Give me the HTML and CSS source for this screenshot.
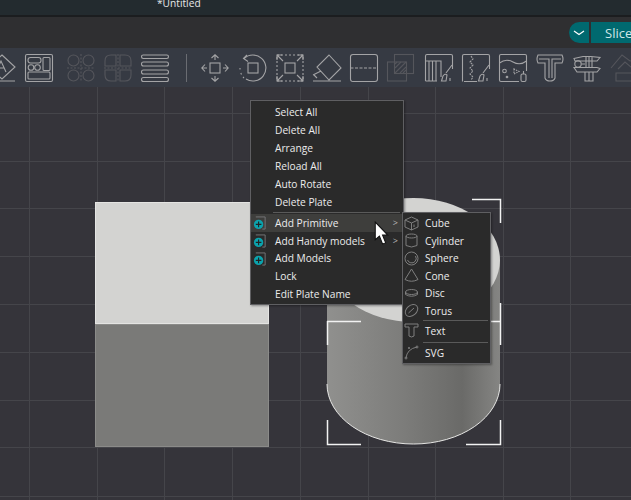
FILE: index.html
```html
<!DOCTYPE html>
<html lang="en">
<head>
<meta charset="utf-8">
<title>Untitled</title>
<link rel="stylesheet" href="styles.css">
</head>
<body>
<div class="app">
  <header class="titlebar"><span class="doc-title">*Untitled</span></header>
  <div class="actionbar">
    <button class="caret-btn" aria-label="More"><svg viewBox="0 0 12 6" width="12" height="6"><path d="M1 1 6 4.500 11 1" fill="none" stroke="#fff" stroke-width="1.200"/></svg></button>
    <button class="slice-btn">Slice</button>
  </div>
  <nav class="toolbar">
    <svg class="tool" viewBox="0 0 28 28"><path d="M14 1 27 13 14 25 1 13ZM0 27H27"/><path d="M8 18 13 7 18 18M10 14H16"/></svg>
    <svg class="tool" viewBox="0 0 28 28"><rect x=".5" y=".5" width="27" height="27" rx="1.500"/><rect x="3" y="3.500" width="13" height="5.500" rx="2.500"/><rect x="18" y="3.500" width="7" height="13" rx="1"/><circle cx="6" cy="13.500" r="2.800"/><circle cx="12.500" cy="13.500" r="2.800"/><rect x="3" y="18" width="22" height="7" rx="1"/></svg>
    <svg class="tool dim group-start" viewBox="0 0 28 28"><circle cx="6.500" cy="6.500" r="5.500"/><circle cx="21.500" cy="6.500" r="5.500"/><circle cx="6.500" cy="21.500" r="5.500"/><circle cx="21.500" cy="21.500" r="5.500"/><path d="M0 14H28M14 0V28" stroke-dasharray="2 1.500"/></svg>
    <svg class="tool dim" viewBox="0 0 28 28"><path d="M12 1H7Q1 1 1 7V12H12ZM16 1H21Q27 1 27 7V12H16ZM12 27H7Q1 27 1 21V16H12ZM16 27H21Q27 27 27 21V16H16Z"/><path d="M14 0V28M0 14H28" stroke-dasharray="2 1.500"/></svg>
    <svg class="tool" viewBox="0 0 28 28"><rect x=".5" y="1" width="27" height="3.500" rx="1.700"/><rect x=".5" y="8" width="27" height="4" rx="2"/><rect x=".5" y="16" width="27" height="4" rx="2"/><rect x=".5" y="23.500" width="27" height="4" rx="2"/></svg>
    <span class="tool-sep"></span>
    <svg class="tool" viewBox="0 0 28 28"><rect x="9" y="9" width="10" height="10"/><path d="M14 1V6M10.500 4 14 .8 17.500 4M14 22V27M10.500 24 14 27.200 17.500 24M1 14H6M4 10.500 .8 14 4 17.500M22 14H27M24 10.500 27.200 14 24 17.500"/></svg>
    <svg class="tool" viewBox="0 0 28 28"><rect x="9" y="9" width="10" height="10"/><path d="M5 4.500A13 13 0 1 1 7 25"/><path d="M8 1 4.500 4.500 9 7.500M1 14V15.500M1.800 19 2.500 20.500M4 23 5 24"/></svg>
    <svg class="tool" viewBox="0 0 28 28"><rect x="9" y="9" width="10" height="10"/><rect x="1" y="1" width="26" height="26" stroke-dasharray="2 2"/><path d="M7 7 1 1M1 6V1H6M21 7 27 1M22 1H27V6M7 21 1 27M1 22V27H6M21 21 27 27M22 27H27V22"/></svg>
    <svg class="tool" viewBox="0 0 28 28"><path d="M16 1 28 14 16 26 4 13ZM0 21 8 17M1 21 4 24M0 27H28"/></svg>
    <svg class="tool" viewBox="0 0 28 28"><rect x=".5" y=".5" width="27" height="27" rx="2.500"/><path d="M.5 14H27.500" stroke-dasharray="3 1.500"/></svg>
    <svg class="tool dim" viewBox="0 0 28 28"><rect x="7.500" y=".5" width="19" height="19"/><rect x=".5" y="8" width="19" height="19"/><path d="M8 19 19 8M8 14 14 8M13 19 19 13M8 10 10 8M16 19 19 16"/></svg>
    <svg class="tool" viewBox="0 0 28 28"><path d="M.5 27V2Q.5 .5 2 .5H26Q27.500 .5 27.500 2V15M.5 7H16V23M.5 27H12M4 7V27M7.500 7V27M11 7V27"/><path d="M27 11 21 19M16.500 27 18 22Q20 19 22 21L21 27ZM25 24V27"/></svg>
    <svg class="tool" viewBox="0 0 28 28"><path d="M.5 27.500V2Q.5 .5 2 .5H26Q27.500 .5 27.500 2V15M15 27.500H2"/><path d="M9 2 11 5 8 8 11 11 8 14 11 17 8 20 11 23 9 26" stroke-dasharray="2 1"/><path d="M27 11 21 19M16.500 27 18 22Q20 19 22 21L21 27ZM25 24V27"/></svg>
    <svg class="tool" viewBox="0 0 28 28"><path d="M20 27.500H2Q.5 27.500 .5 26V2Q.5 .5 2 .5H26Q27.500 .5 27.500 2V17"/><path d="M.5 9Q7 4 14 8T27.500 7"/><circle cx="5.500" cy="17" r="1.800"/><circle cx="8" cy="23" r=".8"/><path d="M15 15V20L20 17.500Z" stroke-dasharray="1.500 1"/><rect x="22" y="20" width="5" height="7.500" rx="1.500"/><path d="M24.500 17V20"/></svg>
    <svg class="tool" viewBox="0 0 28 28"><path d="M2 1H26Q28 5 26 9H19V24Q18 27 14 27 10 27 9 24V9H2Q0 5 2 1Z"/><path d="M3 5H13V24M25 5H16V24"/></svg>
    <svg class="tool" viewBox="0 0 28 28"><path d="M1 4.500 10 2.500H18L27 3.500 24 7H2ZM1 13.500H24L27 14.500 24 18H4ZM13 2.500V13.500M19 2.500V13.500M16 2.500V13.500M12 18V27H20V18M16 18V27M8.500 10H12"/><circle cx="5" cy="10" r="3.200"/></svg>
    <svg class="tool dim" viewBox="0 0 28 28"><path d="M1 14 12 1 20 7 27 5M8 15 15 8 22 14M6 19H28V27H6Z"/></svg>
  </nav>
  <main class="stage">
    <svg class="scene" viewBox="0 87 631 413" aria-hidden="true">
      <defs>
        <linearGradient id="body" x1="0" x2="1" y1="0" y2="0">
          <stop offset="0" stop-color="#90908e"/>
          <stop offset=".45" stop-color="#7c7c7a"/>
          <stop offset=".78" stop-color="#6a6a68"/>
          <stop offset="1" stop-color="#858583"/>
        </linearGradient>
      </defs>
      <g class="grid">
        <path d="M29.500 87V500M97.500 87V500M164.500 87V500M232.500 87V500M300.500 87V500M368.500 87V500M435.500 87V500M503.500 87V500M570.500 87V500"/>
        <path d="M0 113.500H631M0 161.500H631M0 208.500H631M0 256.500H631M0 304.500H631M0 352.500H631M0 400.500H631M0 447.500H631M0 496.500H631"/>
      </g>
      <rect x="95.500" y="202.500" width="173" height="121" fill="#d3d3d1" stroke="#e4e4e2"/>
      <rect x="95.500" y="324.500" width="173" height="122" fill="#7a7a78" stroke="#8b8b89"/>
      <path d="M327 260V384A86.500 60 0 0 0 500 384V260Z" fill="url(#body)"/>
      <path d="M327 384A86.500 60 0 0 0 500 384" fill="none" stroke="#e6e6e4"/>
      <ellipse cx="413.500" cy="260" rx="86.500" ry="62" fill="#d3d3d1"/>
      <path class="frame" d="M472 199.500H500.500V223M327 321.500H361M490 321.500H500.500M500.500 303V345M327.500 321V345M327.500 420V444.500H361M466 444.500H500.500V420"/>
    </svg>

    <div class="menu main-menu">
      <div class="item"><span class="label">Select All</span></div>
      <div class="item"><span class="label">Delete All</span></div>
      <div class="item"><span class="label">Arrange</span></div>
      <div class="item"><span class="label">Reload All</span></div>
      <div class="item"><span class="label">Auto Rotate</span></div>
      <div class="item"><span class="label">Delete Plate</span></div>
      <div class="sep"></div>
      <div class="item active"><svg class="add" viewBox="0 0 15 15"><path class="add-box" d="M3 1H13V14H10"/><circle cx="6" cy="9" r="5" fill="#0ba3ad"/><path d="M6 6V12M3 9H9" stroke="#222" stroke-width="1.200"/></svg><span class="label">Add Primitive</span><span class="arrow">&gt;</span></div>
      <div class="item"><svg class="add" viewBox="0 0 15 15"><path class="add-box" d="M3 1H13V14H10"/><circle cx="6" cy="9" r="5" fill="#0ba3ad"/><path d="M6 6V12M3 9H9" stroke="#222" stroke-width="1.200"/></svg><span class="label">Add Handy models</span><span class="arrow">&gt;</span></div>
      <div class="item"><svg class="add" viewBox="0 0 15 15"><path class="add-box" d="M3 1H13V14H10"/><circle cx="6" cy="9" r="5" fill="#0ba3ad"/><path d="M6 6V12M3 9H9" stroke="#222" stroke-width="1.200"/></svg><span class="label">Add Models</span></div>
      <div class="item"><span class="label">Lock</span></div>
      <div class="item"><span class="label">Edit Plate Name</span></div>
    </div>

    <div class="menu sub-menu">
      <div class="item"><svg class="shape" viewBox="0 0 15 15"><path d="M1 4 7.500 1 14 4V11L7.500 14 1 11ZM1 4 7.500 7 14 4M7.500 7V14"/><path d="M10 8.500V11"/></svg><span class="label">Cube</span></div>
      <div class="item"><svg class="shape" viewBox="0 0 15 15"><ellipse cx="7.500" cy="3" rx="5.500" ry="2"/><path d="M2 3V12.500Q7.500 15.500 13 12.500V3"/></svg><span class="label">Cylinder</span></div>
      <div class="item"><svg class="shape" viewBox="0 0 15 15"><circle cx="7.500" cy="7.500" r="6.500"/><path d="M3.500 9A4.500 4.500 0 0 0 11 10.500 4.500 4.500 0 0 0 11.500 5"/></svg><span class="label">Sphere</span></div>
      <div class="item"><svg class="shape" viewBox="0 0 15 15"><path d="M7.500 1 1 11.500Q7.500 15 14 11.500Z"/></svg><span class="label">Cone</span></div>
      <div class="item"><svg class="shape" viewBox="0 0 15 15"><ellipse cx="7.500" cy="6" rx="6" ry="2.500"/><path d="M1.500 6V8.500Q7.500 12 13.500 8.500V6"/></svg><span class="label">Disc</span></div>
      <div class="item"><svg class="shape" viewBox="0 0 15 15"><ellipse cx="7.500" cy="7.500" rx="7" ry="5" transform="rotate(-40 7.500 7.500)"/><path d="M4.500 10 10 5"/></svg><span class="label">Torus</span></div>
      <div class="sep"></div>
      <div class="item tall"><svg class="shape" viewBox="0 0 15 15"><path d="M1 1H14V4H10V13Q7.500 15 5 13V4H1Z"/></svg><span class="label">Text</span></div>
      <div class="sep"></div>
      <div class="item tall"><svg class="shape" viewBox="0 0 15 15"><path d="M2 13Q3 4 13 2"/><circle cx="2" cy="13" r="1"/><circle cx="13" cy="2" r="1"/><circle cx="5" cy="3" r=".7"/></svg><span class="label">SVG</span></div>
    </div>

    <svg class="cursor" viewBox="0 0 14 24" aria-hidden="true"><path d="M1 1V18L5 14.500 8 22 11 21 8 13.500H13Z" fill="#fff" stroke="#111" stroke-width="1"/></svg>
  </main>
</div>
</body>
</html>
```
FILE: styles.css
```css
* { box-sizing: border-box; }
html, body { margin: 0; height: 100%; background: #35343a; }
body { overflow: hidden; font-family: "Open Sans", "Liberation Sans", sans-serif; }

.app { width: 631px; height: 500px; display: flex; flex-direction: column; overflow: hidden; }

.titlebar {
  height: 17px;
  background: #232b2f;
  border-bottom: 2px solid #1b1d1f;
  overflow: hidden;
  padding-left: 157px;
  flex: none;
}
.doc-title { display: block; margin-top: -4.500px; font-size: 10.200px; line-height: 15px; color: #e6e8e8; }

.actionbar {
  height: 31px;
  flex: none;
  background: #2f2f31;
  display: flex;
  justify-content: flex-end;
  align-items: flex-start;
  gap: 2px;
  padding-top: 5px;
  overflow: hidden;
}
.caret-btn, .slice-btn { border: 0; padding: 0; height: 21px; background: #00696f; color: #dff; }
.caret-btn { width: 20px; border-radius: 11px 0 0 11px; display: flex; align-items: center; justify-content: center; }
.slice-btn { width: 40px; flex: none; font: 13px "Open Sans", sans-serif; color: #cfe6e6; text-align: left; padding-left: 14px; white-space: nowrap; overflow: hidden; }

.toolbar {
  height: 39px;
  flex: none;
  background: #363a43;
  display: flex;
  align-items: center;
  gap: 9.200px;
  margin-left: -12px;
  width: 680px;
  overflow: hidden;
}
.tool { width: 28px; height: 28px; flex: none; fill: none; stroke: #a4a4a6; stroke-width: 1.100; overflow: visible; }
.tool.dim { stroke: #55565c; }
.tool.group-start { margin-left: 4.500px; }
.tool-sep { width: 1.500px; height: 28px; flex: none; background: #6a6c72; margin: 0 4.800px 0 7.500px; }

.stage { position: relative; flex: 1; overflow: hidden; }
.scene { display: block; width: 631px; height: 413px; }
.grid path { fill: none; stroke: #45454a; stroke-width: 1; }
.frame { fill: none; stroke: #f2f2f2; stroke-width: 1.500; }

.menu {
  position: absolute;
  background: #2a2a2a;
  border: 1px solid #5f5f62;
  box-shadow: 1px 1px 2px rgba(0, 0, 0, .35);
  color: #ececec;
  font-size: 10.200px;
}
.main-menu { left: 250px; top: 13px; width: 154px; height: 205px; padding-top: 2px; }
.sub-menu { left: 402px; top: 125px; width: 89px; height: 152px; padding-top: 1.500px; }

.item { position: relative; display: flex; align-items: center; height: 18px; padding-left: 24px; white-space: nowrap; }
.main-menu .sep ~ .item { height: 17.800px; }
.sub-menu .item { height: 17.500px; padding-left: 22px; }
.sub-menu .item.tall { height: 21px; }
.item.active { background: #3e3e3c; }
.label { line-height: 14px; }
.arrow { position: absolute; right: 5px; color: #b8b8b8; font-size: 9px; }

.sep { height: 1px; margin: 1px 3px 1px 22px; background: #5a5a5a; }
.sub-menu .sep { margin: 0 2px 0 20px; }

.add { position: absolute; left: 2px; top: 2px; width: 14px; height: 14px; }
.add-box { fill: none; stroke: #77777a; stroke-width: 1; }
.shape { position: absolute; left: 1px; top: 1px; width: 15px; height: 15px; fill: none; stroke: #7e7e7e; stroke-width: 1; }
.tall .shape { top: 2.500px; }

.cursor { position: absolute; left: 374px; top: 134px; width: 15px; height: 25px; }
```
